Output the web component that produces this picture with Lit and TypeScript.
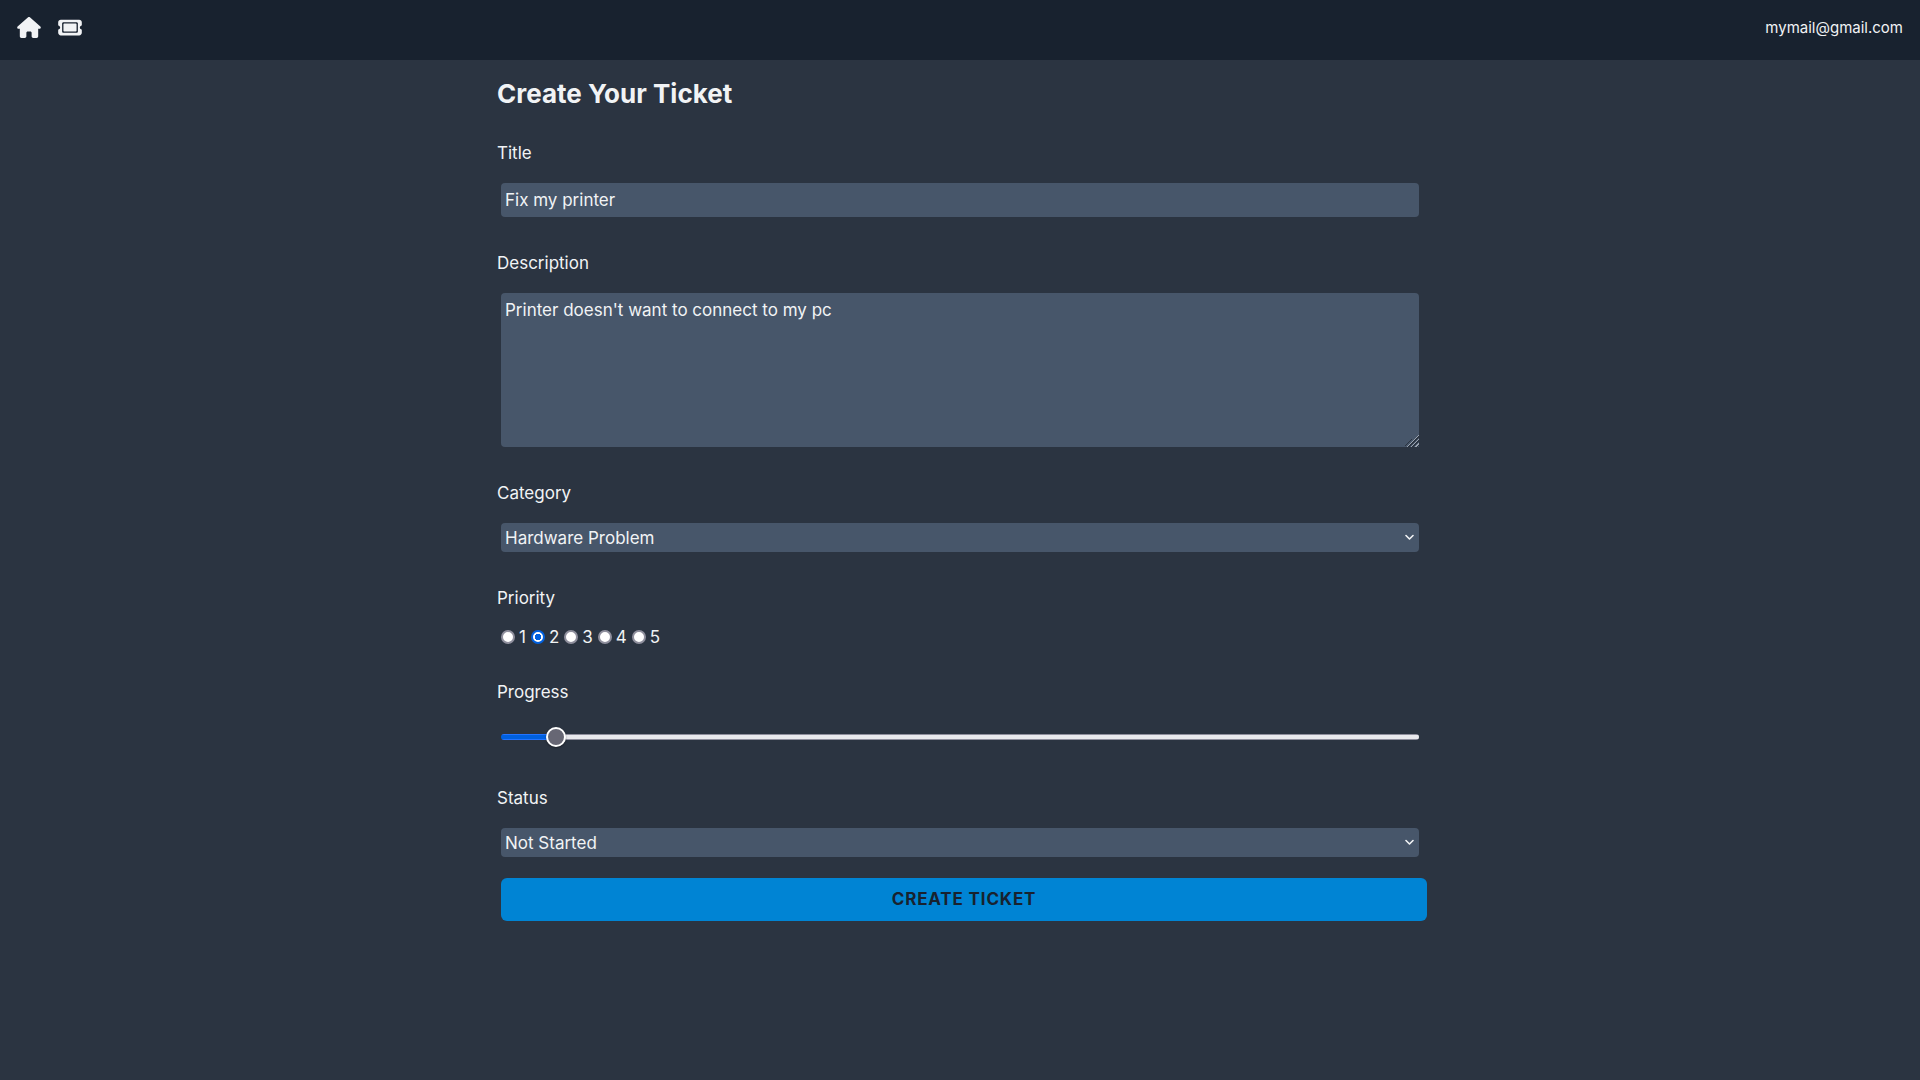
import { LitElement, html, css, svg } from "lit";
import { customElement, property, state } from "lit/decorators.js";
import { styleMap } from "lit/directives/style-map.js";

const chevron = svg`<path d="M1 1.5 4.5 5 8 1.5" fill="none" stroke="currentColor" stroke-width="1.6" stroke-linecap="round" stroke-linejoin="round"/>`;

@customElement("app-nav")
export class AppNav extends LitElement {
  @property() email = "";

  static styles = css`
    :host {
      display: block;
    }
    .bar {
      display: flex;
      justify-content: space-between;
      align-items: flex-start;
      box-sizing: border-box;
      height: 60px;
      padding: 17px;
      background: #18222f;
    }
    .links {
      display: flex;
      gap: 17px;
    }
    .link {
      display: block;
      color: #f1f3f5;
    }
    .icon {
      display: block;
      width: 24px;
      height: 21px;
      fill: currentColor;
    }
    .email {
      margin: 0;
      font-size: 15px;
      line-height: 21px;
    }
  `;

  render() {
    return html`
      <nav class="bar">
        <div class="links">
          <a class="link" href="#home" aria-label="Home">
            <svg class="icon" viewBox="0 0 576 512" aria-hidden="true">
              <path d="M575.8 255.5c0 18-15 32.1-32 32.1h-32l.7 160.2c0 2.7-.2 5.4-.5 8.1V472c0 22.1-17.9 40-40 40H456c-1.1 0-2.2 0-3.3-.1c-1.4 .1-2.8 .1-4.2 .1H416 392c-22.1 0-40-17.9-40-40V448 384c0-17.7-14.3-32-32-32H256c-17.7 0-32 14.3-32 32v64 24c0 22.1-17.9 40-40 40H160 128.1c-1.5 0-3-.1-4.5-.2c-1.2 .1-2.4 .2-3.6 .2H104c-22.1 0-40-17.9-40-40V360c0-.9 0-1.9 .1-2.8V287.6H32c-18 0-32-14-32-32.1c0-9 3-17 10-24L266.4 8c7-7 15-8 22-8s15 2 21 7L564.8 231.5c8 7 12 15 11 24z" />
            </svg>
          </a>
          <a class="link" href="#ticket" aria-label="New ticket">
            <svg class="icon" viewBox="0 0 576 512" aria-hidden="true">
              <path d="M64 64C28.7 64 0 92.7 0 128v64c0 8.8 7.4 15.7 15.7 18.6C34.5 217.1 48 235 48 256s-13.5 38.9-32.3 45.4C7.4 304.3 0 311.2 0 320v64c0 35.3 28.7 64 64 64H512c35.3 0 64-28.7 64-64V320c0-8.8-7.4-15.7-15.7-18.6C541.5 294.9 528 277 528 256s13.5-38.9 32.3-45.4c8.3-2.9 15.7-9.8 15.7-18.6V128c0-35.3-28.7-64-64-64H64zm64 112l0 160c0 8.8 7.2 16 16 16H432c8.8 0 16-7.2 16-16V176c0-8.8-7.2-16-16-16H144c-8.8 0-16 7.2-16 16zM96 160c0-17.7 14.3-32 32-32H448c17.7 0 32 14.3 32 32V352c0 17.7-14.3 32-32 32H128c-17.7 0-32-14.3-32-32V160z" />
            </svg>
          </a>
        </div>
        <p class="email">${this.email}</p>
      </nav>
    `;
  }
}

@customElement("ticket-form")
export class TicketForm extends LitElement {
  @state() private priority = 2;
  @state() private progress = 5;

  static styles = css`
    :host {
      display: flex;
      justify-content: center;
    }
    .form {
      display: flex;
      flex-direction: column;
      gap: 13px;
      width: 100%;
      max-width: 926px;
    }
    .heading {
      margin: 0;
      padding-top: 17px;
      font-size: 26px;
      line-height: 34px;
      font-weight: 700;
    }
    .label {
      margin: 17px 0 0;
      padding: 0;
      line-height: 25px;
    }
    .control {
      display: block;
      box-sizing: border-box;
      margin: 4px;
      border: 0;
      border-radius: 4px;
      background: #47566a;
      color: inherit;
      font: inherit;
      line-height: 26px;
      padding: 4px;
    }
    .area {
      height: 154px;
      resize: vertical;
    }
    .area::-webkit-resizer {
      background:
        linear-gradient(135deg, #47566a 50%, transparent 50%),
        repeating-linear-gradient(
          315deg,
          #47566a 0 1px,
          #2b3441 1px 2px,
          #9aa3ae 2px 3px
        );
    }
    .picker {
      display: grid;
      align-items: center;
      margin: 4px;
    }
    .picker .select,
    .picker .chevron {
      grid-area: 1 / 1;
    }
    .select {
      appearance: none;
      height: 29px;
      margin: 0;
      padding: 0 24px 0 4px;
    }
    .chevron {
      justify-self: end;
      width: 9px;
      height: 7px;
      margin-right: 5px;
      pointer-events: none;
    }
    .group {
      display: contents;
    }
    .radios {
      display: flex;
      align-items: center;
      line-height: 26px;
    }
    .radio-label {
      padding-right: 1px;
    }
    .radio {
      appearance: none;
      box-sizing: border-box;
      width: 14px;
      height: 14px;
      margin: 4px;
      border: 2px solid #8f8f9d;
      border-radius: 50%;
      background: #fff;
    }
    .radio:checked {
      border-color: #0060df;
      background: radial-gradient(circle, #0060df 0 3px, #fff 3px);
    }
    .range {
      appearance: none;
      height: 30px;
      margin: 4px;
      background: transparent;
    }
    .range::-webkit-slider-runnable-track {
      height: 6px;
      border-radius: 3px;
      background:
        linear-gradient(#2374ff 1px, #0060df 1px 5px, #2374ff 5px) 0 0 /
          var(--filled) 100% no-repeat,
        linear-gradient(#8f8f9d 1px, #e9e9ed 1px 5px, #8f8f9d 5px);
    }
    .range::-webkit-slider-thumb {
      appearance: none;
      box-sizing: border-box;
      width: 20px;
      height: 20px;
      margin-top: -7px;
      border: 2px solid #fff;
      border-radius: 50%;
      background: #676774;
      box-shadow: 0 1px 2px rgb(0 0 0 / 40%);
    }
    .submit {
      width: 100%;
      margin: 4px;
      padding: 9px 17px;
      border: 0;
      border-radius: 6px;
      background: #0084d4;
      color: #18222f;
      font: inherit;
      line-height: 25px;
      font-weight: 700;
      letter-spacing: 0.05em;
      text-transform: uppercase;
      cursor: pointer;
    }
  `;

  private onProgress(e: Event) {
    this.progress = Number((e.target as HTMLInputElement).value);
  }

  private renderSelect(id: string, options: string[]) {
    return html`
      <div class="picker">
        <select class="control select" id=${id} name=${id}>
          ${options.map((o) => html`<option>${o}</option>`)}
        </select>
        <svg class="chevron" viewBox="0 0 9 7" aria-hidden="true">${chevron}</svg>
      </div>
    `;
  }

  render() {
    return html`
      <form class="form" @submit=${(e: Event) => e.preventDefault()}>
        <h3 class="heading">Create Your Ticket</h3>

        <label class="label" for="title">Title</label>
        <input class="control" id="title" name="title" type="text" required .value=${"Fix my printer"} />

        <label class="label" for="description">Description</label>
        <textarea class="control area" id="description" name="description" rows="5" required
          .value=${"Printer doesn't want to connect to my pc"}></textarea>

        <label class="label" for="category">Category</label>
        ${this.renderSelect("category", ["Hardware Problem", "Software Problem", "Project"])}

        <div class="group" role="radiogroup" aria-labelledby="priority-label">
          <div class="label" id="priority-label">Priority</div>
          <div class="radios">
            ${[1, 2, 3, 4, 5].map(
              (n) => html`
                <input class="radio" id="priority-${n}" name="priority" type="radio" value=${n}
                  .checked=${this.priority === n}
                  @change=${() => (this.priority = n)} />
                <label class="radio-label" for="priority-${n}">${n}</label>
              `
            )}
          </div>
        </div>

        <label class="label" for="progress">Progress</label>
        <input class="range" id="progress" name="progress" type="range" min="0" max="100"
          .value=${String(this.progress)}
          style=${styleMap({ "--filled": `${this.progress}%` })}
          @input=${this.onProgress} />

        <label class="label" for="status">Status</label>
        ${this.renderSelect("status", ["Not Started", "Started", "Done"])}

        <button class="submit" type="submit">Create Ticket</button>
      </form>
    `;
  }
}

@customElement("app-root")
export class AppRoot extends LitElement {
  static styles = css`
    :host {
      display: flex;
      flex-direction: column;
      min-height: 100vh;
      background: #2b3441;
      color: #f1f3f5;
      font-family: Inter, "Liberation Sans", sans-serif;
      font-size: 17px;
      line-height: 25px;
    }
    .page {
      flex: 1;
    }
  `;

  render() {
    return html`
      <app-nav email="mymail@gmail.com"></app-nav>
      <main class="page"><ticket-form></ticket-form></main>
    `;
  }
}
